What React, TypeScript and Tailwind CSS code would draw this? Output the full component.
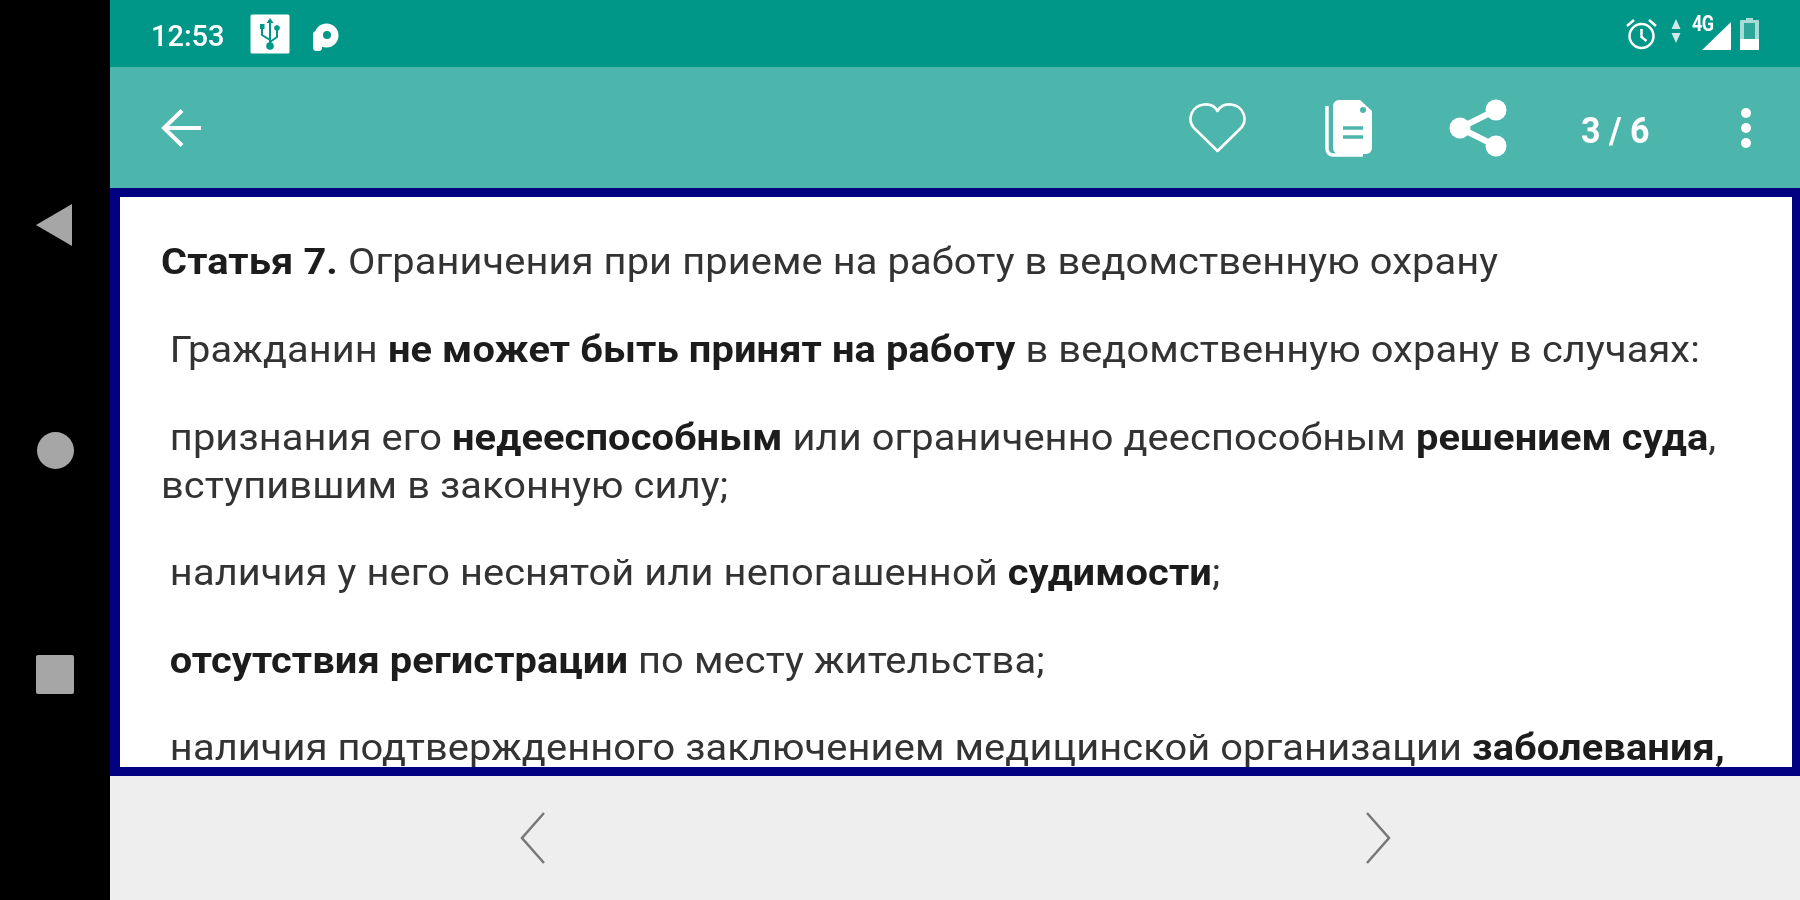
import React from "react";

const Back = () => (
  <svg width="40" height="38" viewBox="0 0 40 38" fill="none" stroke="white" strokeWidth="4">
    <path d="M40 19H3M21 1.500 3 19l18 17.500" />
  </svg>
);
const Heart = () => (
  <svg width="57" height="51" viewBox="0 0 57 51" fill="none" stroke="white" strokeWidth="2.600" strokeLinejoin="round">
    <path d="M28.500 49 5 26C-2 18 2 4 15 2.500c6-.5 11 2 13.500 6.500C31 4.500 36 2 42 2.500 55 4 59 18 52 26z" />
  </svg>
);
const Copy = () => (
  <svg width="51" height="58" viewBox="0 0 51 58">
    <path d="M17 1h21l12 11v37a6 6 0 0 1-6 6H17a6 6 0 0 1-6-6V7a6 6 0 0 1 6-6z" fill="white" />
    <path d="M5 7v43a6 6 0 0 0 6 6h30" fill="none" stroke="white" strokeWidth="3.500" />
    <path d="M21 29h20M21 38h20" stroke="#4DB6AC" strokeWidth="3.500" />
    <circle cx="41" cy="11" r="3" fill="#4DB6AC" />
  </svg>
);
const Share = () => (
  <svg width="58" height="58" viewBox="0 0 58 58" fill="white">
    <path d="M47 11 11 29l36 18" fill="none" stroke="white" strokeWidth="6" />
    <circle cx="47" cy="11" r="10.500" />
    <circle cx="11" cy="29" r="10.500" />
    <circle cx="47" cy="47" r="10.500" />
  </svg>
);
const Dots = () => (
  <svg width="12" height="42" viewBox="0 0 12 42" fill="white">
    <circle cx="6" cy="6" r="5" />
    <circle cx="6" cy="21" r="5" />
    <circle cx="6" cy="36" r="5" />
  </svg>
);
const Usb = () => (
  <svg width="40" height="40" viewBox="0 0 40 40">
    <rect x="0.500" y="0.500" width="39" height="39" rx="1.500" fill="white" />
    <path d="M20 6v26M20 26l-8-5v-6M20 28l7-5v-7" stroke="#009688" strokeWidth="2" fill="none" />
    <rect x="10" y="10" width="4.500" height="5" fill="#009688" />
    <circle cx="27" cy="14" r="2.800" fill="#009688" />
    <path d="M16.500 9h7L20 4z" fill="#009688" />
    <circle cx="20" cy="32" r="3.800" fill="#009688" />
  </svg>
);
const PIcon = () => (
  <svg width="26" height="28" viewBox="0 0 26 28">
    <circle cx="13.500" cy="12.500" r="12" fill="white" />
    <rect x="0" y="8" width="9" height="20" rx="3.500" fill="white" />
    <circle cx="14" cy="12" r="4" fill="#009688" />
  </svg>
);
const Alarm = () => (
  <svg width="33" height="32" viewBox="0 0 33 32" fill="none" stroke="white" strokeWidth="2.500">
    <circle cx="16.500" cy="18" r="12" />
    <path d="M16.500 11v8l5 4M2 8l7-6M31 8l-7-6" />
  </svg>
);
const Arrows = () => (
  <svg width="12" height="24" viewBox="0 0 12 24" fill="#cfe9e6">
    <path d="M6 0l4.500 10h-9zM1.500 14h9L6 24z" />
  </svg>
);
const Signal = () => (
  <svg width="29" height="28" viewBox="0 0 29 28" fill="white">
    <path d="M29 0v28H0z" />
  </svg>
);
const Battery = () => (
  <svg width="19" height="32" viewBox="0 0 19 32">
    <path d="M6 0h7v2h5a1 1 0 0 1 1 1v28a1 1 0 0 1-1 1H1a1 1 0 0 1-1-1V3a1 1 0 0 1 1-1h5z" fill="#a8dcd6" />
    <rect x="4" y="5" width="11" height="17" fill="#2fa69a" />
    <rect x="0" y="21" width="19" height="11" fill="white" />
  </svg>
);
const Chevron = ({ right }: { right?: boolean }) => (
  <svg width="26" height="52" viewBox="0 0 26 52" fill="none" stroke="#777777" strokeWidth="2.500">
    <path d={right ? "M2 1l22 25L2 51" : "M24 1 2 26l22 25"} />
  </svg>
);

export default function App() {
  return (
    <div className="h-[900px] w-[1800px] overflow-hidden">
      <div className="-m-[4px] flex h-[908px] w-[1808px] bg-black font-['Roboto',sans-serif] blur-[0.7px]">
        <nav className="flex w-[114px] shrink-0 flex-col items-center gap-[186px] bg-black pl-[4px] pt-[208px]">
          <svg width="38" height="42" viewBox="0 0 38 42" fill="#a6a6a6"><path d="M36 0v42L0 21z" /></svg>
          <div className="h-[37px] w-[37px] rounded-full bg-[#a6a6a6]" />
          <div className="h-[39px] w-[38px] rounded-[2px] bg-[#a6a6a6]" />
        </nav>
        <div className="flex min-w-0 flex-1 flex-col">
          <header className="flex h-[71px] shrink-0 items-center bg-[#009688] pl-[41px] pr-[45px] pt-[4px] text-white">
            <span className="mt-[5px] w-[99px] text-[29px] font-medium leading-none">12:53</span>
            <Usb />
            <span className="ml-[23px] mt-[6px]"><PIcon /></span>
            <div className="ml-auto flex items-end">
              <Alarm />
              <span className="mb-[7px] ml-[12px]"><Arrows /></span>
              <div className="relative ml-[20px]">
                <Signal />
                <span className="absolute left-[-10px] top-[-8px] scale-y-125 text-[18px] font-bold leading-none tracking-[-0.5px]">4G</span>
              </div>
              <span className="ml-[9px]"><Battery /></span>
            </div>
          </header>
          <div className="flex h-[121px] shrink-0 items-center bg-[#4DB6AC] pl-[51px] text-white">
            <Back />
            <div className="ml-[988px]"><Heart /></div>
            <div className="ml-[76px]"><Copy /></div>
            <div className="ml-[76px]"><Share /></div>
            <span className="ml-[74px] mt-[5px] w-[69px] scale-y-110 whitespace-nowrap text-[34px] font-bold leading-none">3 / 6</span>
            <div className="ml-[90px]"><Dots /></div>
          </div>
          <main className="flex-1 overflow-hidden border-[#000080] border-t-[9px] border-r-[12px] border-b-[9px] border-l-[10px] bg-white pl-[41px] pt-[41px] text-[36px] leading-[48px] tracking-[0.1px] text-[#333333]">
            <div className="w-[1474px] origin-left scale-x-[1.105]">
              <p className="mb-[40px] whitespace-nowrap"><b className="font-bold text-[#1c1c1c]">Статья 7.</b> Ограничения при приеме на работу в ведомственную охрану</p>
              <p className="mb-[40px] indent-[8px] whitespace-nowrap">Гражданин <b className="font-bold text-[#1c1c1c]">не может быть принят на работу</b> в ведомственную охрану в случаях:</p>
              <p className="mb-[39px] indent-[8px]">признания его <b className="font-bold text-[#1c1c1c]">недееспособным</b> или ограниченно дееспособным <b className="font-bold text-[#1c1c1c]">решением суда</b>, вступившим в законную силу;</p>
              <p className="mb-[40px] indent-[8px]">наличия у него неснятой или непогашенной <b className="font-bold text-[#1c1c1c]">судимости</b>;</p>
              <p className="mb-[39px] indent-[8px]"><b className="font-bold text-[#1c1c1c]">отсутствия регистрации</b> по месту жительства;</p>
              <p className="indent-[8px] whitespace-nowrap">наличия подтвержденного заключением медицинской организации <b className="font-bold text-[#1c1c1c]">заболевания,</b></p>
            </div>
          </main>
          <footer className="flex h-[128px] shrink-0 items-center justify-between bg-[#EEEEEE] pb-[4px] pl-[410px] pr-[413px]">
            <Chevron />
            <Chevron right />
          </footer>
        </div>
      </div>
    </div>
  );
}
